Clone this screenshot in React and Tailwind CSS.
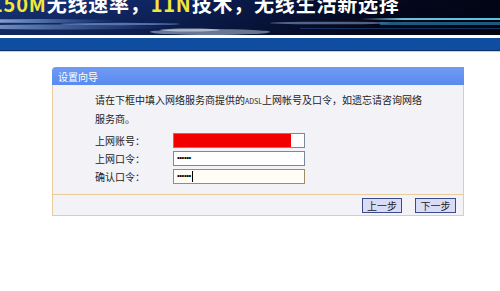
import React from "react";

const cjk = { fontFamily: '"Noto Sans CJK SC", "Noto Sans", sans-serif' };

function Banner() {
  return (
    <div className="relative h-[35px] overflow-hidden bg-[linear-gradient(to_right,#1a3d8f_0%,#122c74_30%,#0a1848_55%,#050a24_75%,#03061a_100%)]">
      <svg className="absolute inset-0" width="500" height="35" viewBox="0 0 500 35">
        <defs>
          <linearGradient id="fadeL" x1="0" x2="1">
            <stop offset="0" stopColor="#cfe6ff" stopOpacity="0.9" />
            <stop offset="1" stopColor="#6fa8ff" stopOpacity="0" />
          </linearGradient>
          <linearGradient id="cyan" x1="0" x2="1">
            <stop offset="0" stopColor="#7fd4f0" stopOpacity="0" />
            <stop offset="0.3" stopColor="#7fd4f0" stopOpacity="0.9" />
            <stop offset="1" stopColor="#5ac0e4" stopOpacity="1" />
          </linearGradient>
          <linearGradient id="dark" x1="0" x2="0" y1="0" y2="1">
            <stop offset="0" stopColor="#000" stopOpacity="0.15" />
            <stop offset="1" stopColor="#000" stopOpacity="0.35" />
          </linearGradient>
        </defs>
        <rect x="0" y="0" width="500" height="35" fill="url(#dark)" />
        <ellipse cx="40" cy="21" rx="80" ry="2" fill="url(#fadeL)" />
        <ellipse cx="60" cy="27" rx="110" ry="2.5" fill="url(#fadeL)" opacity="0.8" />
        <ellipse cx="120" cy="24" rx="60" ry="1.2" fill="#9cc4ff" opacity="0.5" />
        <ellipse cx="210" cy="32" rx="60" ry="3" fill="#b8c8dc" opacity="0.55" />
        <ellipse cx="190" cy="30" rx="30" ry="1.5" fill="#dfe8f4" opacity="0.6" />
        <ellipse cx="330" cy="23" rx="60" ry="1.3" fill="#9fb8e0" opacity="0.5" />
        <rect x="360" y="18" width="140" height="2" fill="url(#cyan)" />
        <rect x="380" y="22" width="120" height="3" fill="#2a7ea8" opacity="0.7" />
        <rect x="300" y="28" width="200" height="1" fill="#1c3c70" opacity="0.8" />
      </svg>
      <div
        className="relative ml-[-9px] mt-[-6px] whitespace-nowrap text-[20px] font-bold leading-[20px] tracking-[0.8px] text-white"
        style={cjk}
      >
        <span className="text-[#f2e63a]">150M</span>无线速率，
        <span className="text-[#f2e63a]">11N</span>技术，无线生活新选择
      </div>
    </div>
  );
}

function Field({ label, children }) {
  return (
    <div className="flex h-[18px] items-center">
      <div className="w-[78px] text-[10px] text-[#222]">{label}</div>
      {children}
    </div>
  );
}

function Dots() {
  return (
    <span className="text-[8px] tracking-[-0.5px] text-black" style={{ fontFamily: '"Liberation Sans", sans-serif' }}>
      ••••••
    </span>
  );
}

export default function App() {
  return (
    <div className="h-[291px] w-[500px] overflow-hidden bg-white" style={cjk}>
      <Banner />
      <div className="h-[3px] bg-white" />
      <div className="h-[12px] bg-[#0e4d9f]" />
      <div className="h-[1px] bg-[#0b3468]" />
      <div className="h-[1px] bg-[#a8d8f2]" />

      <div className="ml-[52px] mt-[15px] w-[412px]">
        <div className="flex h-[18px] items-center rounded-tl-[4px] bg-[linear-gradient(#6e9bf4,#5a8aee)] pl-[6px] text-[10px] text-white">
          设置向导
        </div>
        <div className="border-x border-[#e8cc9c] bg-[#f3f3f7] pb-[9px] pl-[42px] pt-[6px]">
          <p className="whitespace-nowrap text-[10px] leading-[17px] text-[#222]">
            请在下框中填入网络服务商提供的<span className="text-[7px]">ADSL</span>上网帐号及口令，如遗忘请咨询网络
            <br />
            服务商。
          </p>
          <div className="mt-[4px] flex flex-col">
            <Field label="上网账号：">
              <div className="flex h-[15px] w-[132px] border border-[#7b8896] bg-white">
                <div className="w-[117px] bg-[#f20000]" />
              </div>
            </Field>
            <Field label="上网口令：">
              <div className="flex h-[15px] w-[132px] items-center border border-[#7b8896] bg-white pl-[3px]">
                <Dots />
              </div>
            </Field>
            <Field label="确认口令：">
              <div className="flex h-[15px] w-[132px] items-center border border-[#a08c64] bg-[#fffdf6] pl-[3px]">
                <Dots />
                <span className="ml-[1px] h-[11px] w-[1px] bg-black" />
              </div>
            </Field>
          </div>
        </div>
        <div className="flex h-[22px] items-center justify-end gap-[13px] border border-[#e8cc9c] bg-[#f3f3f7] pr-[7px]">
          <button className="flex h-[15px] w-[40px] items-center justify-center border border-[#3c4a8c] bg-[#d9dcf7] text-[10px] text-[#222]">
            上一步
          </button>
          <button className="flex h-[15px] w-[41px] items-center justify-center border border-[#3c4a8c] bg-[#d9dcf7] text-[10px] text-[#222]">
            下一步
          </button>
        </div>
      </div>
    </div>
  );
}
